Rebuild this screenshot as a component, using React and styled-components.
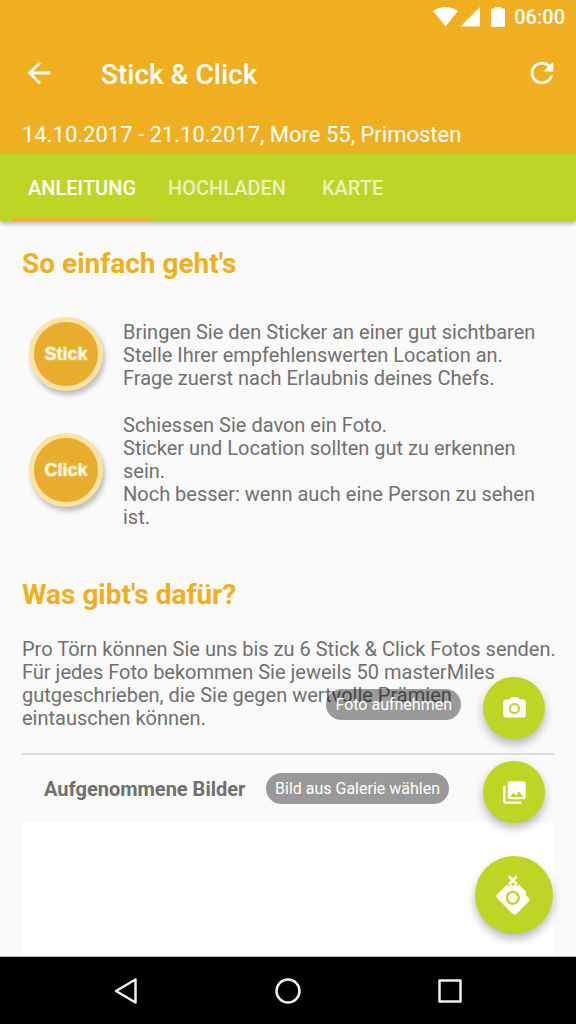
import React, { useState } from "react";
import styled, { createGlobalStyle } from "styled-components";
import { MdArrowBack, MdRefresh, MdPhotoCamera, MdCollections } from "react-icons/md";

const GlobalStyle = createGlobalStyle`
  * { box-sizing: border-box; }
  body { margin: 0; font-family: Roboto, "Liberation Sans", sans-serif; color: #707070; background: #fafafa; }
  h1, h2, h3, p { margin: 0; }
  button { border: 0; padding: 0; font: inherit; color: inherit; background: none; cursor: pointer; }
`;

const Screen = styled.div`
  display: flex;
  flex-direction: column;
  height: 100vh;
`;

const Header = styled.header`
  flex: none;
  position: relative;
  z-index: 1;
  color: #fff;
  background: #f0af20;
  box-shadow: 0 2px 5px rgba(0, 0, 0, 0.35);
`;

const StatusBar = styled.div`
  display: flex;
  justify-content: flex-end;
  align-items: center;
  gap: 9px;
  height: 34px;
  padding-right: 11px;
  font-size: 20px;
  line-height: 24px;
  font-weight: 500;
  svg { display: block; }
`;

const Toolbar = styled.div`
  display: flex;
  align-items: center;
  height: 78px;
  padding: 0 17px 0 22px;
`;

const IconButton = styled.button`
  display: flex;
  font-size: 34px;
`;

const Title = styled.h1`
  flex: 1;
  margin-left: 45px;
  padding-top: 3px;
  font-size: 28px;
  line-height: 34px;
  font-weight: 500;
`;

const Subtitle = styled.p`
  padding: 10px 22px 6px;
  font-size: 22px;
  line-height: 26px;
`;

const Tabs = styled.div`
  display: flex;
  height: 67px;
  padding: 0 12px;
  background: #bed526;
`;

const Tab = styled.button`
  min-width: 101px;
  padding: 4px 16px 0;
  font-size: 20px;
  font-weight: 500;
  text-transform: uppercase;
  color: ${(p) => (p.$active ? "#fff" : "rgba(255, 255, 255, 0.7)")};
  border-bottom: 3px solid ${(p) => (p.$active ? "#f0af20" : "transparent")};
`;

const Stage = styled.div`
  flex: 1;
  min-height: 0;
  position: relative;
`;

const Content = styled.main`
  display: flex;
  flex-direction: column;
  height: 100%;
  padding: 27px 22px 0;
  overflow: hidden;
  font-size: 20px;
  line-height: 23px;
`;

const Heading = styled.h2`
  font-size: 28px;
  line-height: 32px;
  font-weight: 700;
  color: #f0af20;
`;

const Steps = styled.div`
  display: flex;
  flex-direction: column;
  gap: 24px;
  margin: 41px 0 50px;
`;

const Step = styled.div`
  display: flex;
  align-items: center;
  gap: 20px;
  padding-left: 7px;
`;

const Sticker = styled.div`
  flex: none;
  display: grid;
  place-items: center;
  width: 74px;
  height: 74px;
  margin: -6px 0 -2px;
  border: 5px solid #fae3a5;
  border-radius: 50%;
  background: #e8ad2c;
  box-shadow: 2px 4px 5px rgba(0, 0, 0, 0.25);
  font: bold 18px/20px "Liberation Sans", Arial, sans-serif;
  color: #fff6dc;
  text-shadow: 0 0 2px #fff3d0;
`;

const Reward = styled.p`
  margin: 27px -4px 23px 0;
`;

const GalleryTitle = styled.h3`
  padding: 23px 22px 21px;
  border-top: 2px solid #dcdcdc;
  font-size: 20px;
  line-height: 23px;
  font-weight: 700;
`;

const Gallery = styled.div`
  flex: 1;
  background: #fff;
`;

const Actions = styled.div`
  position: absolute;
  right: 23px;
  bottom: 22px;
  display: flex;
  flex-direction: column;
  align-items: flex-end;
`;

const Action = styled.div`
  display: flex;
  align-items: center;
  gap: ${(p) => p.$gap}px;
  margin: 0 8px ${(p) => p.$space}px 0;
`;

const ActionLabel = styled.label`
  margin-bottom: 8px;
  padding: 0 9px;
  border-radius: 16px;
  font-size: 16px;
  line-height: 31px;
  color: #fff;
  background: rgba(0, 0, 0, 0.39);
  cursor: pointer;
`;

const Fab = styled.button`
  display: grid;
  place-items: center;
  width: ${(p) => p.$size}px;
  height: ${(p) => p.$size}px;
  border-radius: 50%;
  color: #fff;
  background: #bed526;
  box-shadow: 0 5px 10px rgba(0, 0, 0, 0.28);
`;

const NavBar = styled.nav`
  flex: none;
  display: flex;
  justify-content: center;
  align-items: center;
  gap: 128px;
  height: 68px;
  border-top: 1px solid #b9bdb9;
  background: #000;
  button { display: flex; }
`;

function StatusIcons() {
  return (
    <svg width="72" height="20" viewBox="0 0 72 20" fill="#fff" aria-hidden="true">
      <path d="M0 4Q12.500-4 25 4L12.500 19.500Z" />
      <path d="M47 0V19.500H27.500Z" />
      <path d="M62 0h6v1.500h3a1 1 0 0 1 1 1V19a1 1 0 0 1-1 1H59a1 1 0 0 1-1-1V2.500a1 1 0 0 1 1-1h3Z" />
    </svg>
  );
}

function StickClickIcon() {
  return (
    <svg width="78" height="78" viewBox="106 48 235 235" aria-hidden="true">
      <path
        fill="#fff"
        d="M172 165L203 134L209 140L215 132L221 139L227 132L233 139L238 134L257 153Q260 156 259 166L268 174Q273 180 268 185L232 221Q226 227 219 222L172 174Q168 169 172 165Z"
      />
      <path stroke="#fff" strokeWidth="8" d="M208 109L232 133M232 109L208 133" />
      <circle cx="220" cy="174" r="18" fill="#fff" stroke="#bed526" strokeWidth="7" />
    </svg>
  );
}

const TABS = ["Anleitung", "Hochladen", "Karte"];

export default function App() {
  const [active, setActive] = useState(0);
  return (
    <Screen>
      <GlobalStyle />
      <Header>
        <StatusBar>
          <StatusIcons />
          <span>06:00</span>
        </StatusBar>
        <Toolbar>
          <IconButton aria-label="Zurück"><MdArrowBack /></IconButton>
          <Title>Stick &amp; Click</Title>
          <IconButton aria-label="Aktualisieren"><MdRefresh /></IconButton>
        </Toolbar>
        <Subtitle>14.10.2017 - 21.10.2017, More 55, Primosten</Subtitle>
        <Tabs role="tablist">
          {TABS.map((name, i) => (
            <Tab key={name} role="tab" aria-selected={i === active} $active={i === active} onClick={() => setActive(i)}>
              {name}
            </Tab>
          ))}
        </Tabs>
      </Header>
      <Stage>
        <Content>
          <Heading>So einfach geht's</Heading>
          <Steps>
            <Step>
              <Sticker>Stick</Sticker>
              <p>
                Bringen Sie den Sticker an einer gut sichtbaren Stelle Ihrer empfehlenswerten Location an.
                <br />
                Frage zuerst nach Erlaubnis deines Chefs.
              </p>
            </Step>
            <Step>
              <Sticker>Click</Sticker>
              <p>
                Schiessen Sie davon ein Foto.
                <br />
                Sticker und Location sollten gut zu erkennen sein.
                <br />
                Noch besser: wenn auch eine Person zu sehen ist.
              </p>
            </Step>
          </Steps>
          <Heading>Was gibt's dafür?</Heading>
          <Reward>
            Pro Törn können Sie uns bis zu 6 Stick &amp; Click Fotos senden. Für jedes Foto bekommen Sie jeweils 50
            masterMiles gutgeschrieben, die Sie gegen wertvolle Prämien eintauschen können.
          </Reward>
          <GalleryTitle>Aufgenommene Bilder</GalleryTitle>
          <Gallery />
        </Content>
        <Actions>
          <Action $gap={22} $space={22}>
            <ActionLabel htmlFor="take-photo">Foto aufnehmen</ActionLabel>
            <Fab id="take-photo" $size={62}><MdPhotoCamera size={27} /></Fab>
          </Action>
          <Action $gap={34} $space={33}>
            <ActionLabel htmlFor="pick-photo">Bild aus Galerie wählen</ActionLabel>
            <Fab id="pick-photo" $size={62}><MdCollections size={27} /></Fab>
          </Action>
          <Fab $size={78} aria-label="Menü schließen"><StickClickIcon /></Fab>
        </Actions>
      </Stage>
      <NavBar>
        <button aria-label="Zurück">
          <svg width="34" height="34" viewBox="0 0 34 34" fill="none" stroke="#eee" strokeWidth="2.500" strokeLinejoin="round">
            <path d="M26.500 5.500V28.500L7 17Z" />
          </svg>
        </button>
        <button aria-label="Startseite">
          <svg width="34" height="34" viewBox="0 0 34 34" fill="none" stroke="#eee" strokeWidth="2.500">
            <circle cx="17" cy="17" r="11.500" />
          </svg>
        </button>
        <button aria-label="Übersicht">
          <svg width="34" height="34" viewBox="0 0 34 34" fill="none" stroke="#eee" strokeWidth="2.500" strokeLinejoin="round">
            <rect x="6.500" y="6.500" width="21" height="21" />
          </svg>
        </button>
      </NavBar>
    </Screen>
  );
}
